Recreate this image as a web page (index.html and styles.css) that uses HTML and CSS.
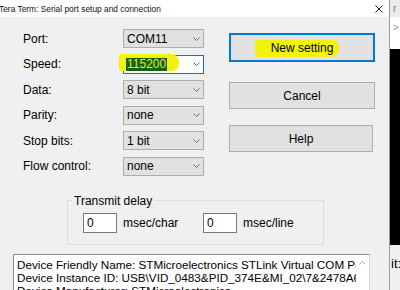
FILE: index.html
```html
<!DOCTYPE html>
<html lang="en">
<head>
  <meta charset="UTF-8" />
  <title>Tera Term: Serial port setup and connection</title>
  <link rel="stylesheet" href="styles.css">
</head>
<body>
  <div class="screen">
    <div class="dialog">
      <div class="titlebar">
        <span class="title">Tera Term: Serial port setup and connection</span>
        <svg class="close" width="8" height="8" viewBox="0 0 8 8">
          <path d="M0.5 0.5 L7.5 7.5 M7.5 0.5 L0.5 7.5" stroke="#222" stroke-width="1" fill="none"/>
        </svg>
      </div>

      <div class="top">
        <div class="fields">
          <div class="row">
            <label>Port:</label>
            <div class="combo"><span>COM11</span><svg class="chev" width="7" height="4" viewBox="0 0 7 4"><path d="M0.5 0.5 L3.5 3.5 L6.5 0.5" stroke="#6a6a6a" fill="none"/></svg></div>
          </div>
          <div class="row">
            <label>Speed:</label>
            <div class="combo focus">
              <span class="hl"></span>
              <span class="sel">115200</span>
              <svg class="chev" width="7" height="4" viewBox="0 0 7 4"><path d="M0.5 0.5 L3.5 3.5 L6.5 0.5" stroke="#6a6a6a" fill="none"/></svg>
            </div>
          </div>
          <div class="row">
            <label>Data:</label>
            <div class="combo"><span>8 bit</span><svg class="chev" width="7" height="4" viewBox="0 0 7 4"><path d="M0.5 0.5 L3.5 3.5 L6.5 0.5" stroke="#6a6a6a" fill="none"/></svg></div>
          </div>
          <div class="row">
            <label>Parity:</label>
            <div class="combo"><span>none</span><svg class="chev" width="7" height="4" viewBox="0 0 7 4"><path d="M0.5 0.5 L3.5 3.5 L6.5 0.5" stroke="#6a6a6a" fill="none"/></svg></div>
          </div>
          <div class="row">
            <label>Stop bits:</label>
            <div class="combo"><span>1 bit</span><svg class="chev" width="7" height="4" viewBox="0 0 7 4"><path d="M0.5 0.5 L3.5 3.5 L6.5 0.5" stroke="#6a6a6a" fill="none"/></svg></div>
          </div>
          <div class="row">
            <label>Flow control:</label>
            <div class="combo"><span>none</span><svg class="chev" width="7" height="4" viewBox="0 0 7 4"><path d="M0.5 0.5 L3.5 3.5 L6.5 0.5" stroke="#6a6a6a" fill="none"/></svg></div>
          </div>
        </div>

        <div class="buttons">
          <div class="btn default"><span class="hl"></span><span class="label">New setting</span></div>
          <div class="btn cancel">Cancel</div>
          <div class="btn help">Help</div>
        </div>
      </div>

      <fieldset class="delay">
        <legend>Transmit delay</legend>
        <div class="delay-row">
          <div class="num">0</div>
          <span class="unit">msec/char</span>
          <div class="num">0</div>
          <span class="unit">msec/line</span>
        </div>
      </fieldset>

      <div class="info">
        <div class="info-text">
          <div class="line">Device Friendly Name: STMicroelectronics STLink Virtual COM Port (COM11)</div>
          <div class="line">Device Instance ID: USB\VID_0483&amp;PID_374E&amp;MI_02\7&amp;2478A674&amp;0&amp;0002</div>
          <div class="line">Device Manufacturer: STMicroelectronics</div>
        </div>
        <div class="scroll">
          <svg width="7" height="4" viewBox="0 0 7 4"><path d="M0.5 3.5 L3.5 0.5 L6.5 3.5" stroke="#b0b0b0" fill="none"/></svg>
        </div>
      </div>
    </div>

    <div class="side">
      <div class="side-top">r</div>
      <div class="side-nav">&gt;</div>
      <div class="side-dark"></div>
      <div class="side-bottom">it:</div>
    </div>
  </div>
</body>
</html>
```

FILE: styles.css
```css
* {
  box-sizing: border-box;
}

body {
  margin: 0;
  font-family: "Liberation Sans", Arial, sans-serif;
  font-size: 12px;
  color: #000;
  background: #000;
}

.screen {
  display: flex;
  width: 400px;
  height: 290px;
  overflow: hidden;
}

.dialog {
  width: 390px;
  height: 290px;
  background: #f0f0f0;
  border-right: 1px solid #9a9a9a;
  display: flex;
  flex-direction: column;
  overflow: hidden;
}

.titlebar {
  height: 17px;
  flex: none;
  background: #fff;
  display: flex;
  align-items: center;
  justify-content: space-between;
}

.title {
  font-size: 8.4px;
  margin-left: -1px;
  color: #111;
}

.close {
  margin-right: 6px;
}

/* combos and buttons */
.top {
  display: flex;
  gap: 25px;
  margin: 12px 0 0 23px;
}

.fields {
  display: flex;
  flex-direction: column;
  gap: 6.5px;
}

.row {
  display: flex;
  align-items: center;
  height: 19px;
}

.row label {
  width: 100px;
}

.combo {
  position: relative;
  width: 81px;
  height: 19px;
  border: 1px solid #adadad;
  background: #e1e1e1;
  display: flex;
  align-items: center;
  justify-content: space-between;
  padding: 0 3px 0 3px;
}

.combo.focus {
  background: #fff;
  border-color: #0078d7;
}

.combo .hl {
  position: absolute;
  left: -5px;
  top: -2px;
  width: 60px;
  height: 17px;
  background: #f2f20c;
  border-radius: 3px 8px 7px 3px;
}

.combo .sel {
  position: relative;
  background: #11650f;
  color: #e4e44c;
  line-height: 13px;
  padding: 0 1px;
  margin-left: -1px;
}

.buttons {
  display: flex;
  flex-direction: column;
  width: 146px;
  margin-top: 4px;
}

.btn {
  position: relative;
  height: 27px;
  border: 1px solid #adadad;
  background: #e1e1e1;
  display: flex;
  align-items: center;
  justify-content: center;
}

.btn.default {
  height: 29px;
  border: 2px solid #0078d7;
}

.btn .hl {
  position: absolute;
  left: 24px;
  top: 5px;
  width: 84px;
  height: 17px;
  background: #f2f20c;
  border-radius: 2px 6px 8px 3px;
}

.btn .label {
  position: relative;
}

.btn.cancel {
  margin-top: 20px;
}

.btn.help {
  margin-top: 16px;
  width: 144px;
}

/* transmit delay group */
.delay {
  margin: 18px 0 0 67px;
  width: 255px;
  padding: 0;
  border: 1px solid #dcdcdc;
}

.delay legend {
  margin-left: 4px;
  padding: 0 2px;
  line-height: 14px;
}

.delay-row {
  display: flex;
  align-items: center;
  padding: 5px 0 11px 15px;
}

.num {
  width: 34px;
  height: 20px;
  background: #fff;
  border: 1px solid #7a7a7a;
  padding-left: 3px;
  line-height: 18px;
}

.unit {
  width: 80px;
  margin-left: 6px;
}

/* device info */
.info {
  margin: 9px 0 0 13px;
  width: 357px;
  flex: 1;
  display: flex;
  background: #fff;
  border: 1px solid #8a8a8a;
  border-right-color: #d8d8d8;
  border-bottom: none;
}

.info-text {
  flex: 1;
  min-width: 0;
  overflow: hidden;
  padding: 3px 0 0 3px;
  font-size: 11.7px;
  line-height: 13px;
}

.info-text .line {
  white-space: nowrap;
  overflow: hidden;
}

.scroll {
  width: 13px;
  display: flex;
  justify-content: center;
  padding-top: 6px;
}

/* neighbouring window */
.side {
  width: 10px;
  display: flex;
  flex-direction: column;
  overflow: hidden;
}

.side-top {
  height: 17px;
  background: #ececec;
  color: #777;
  font-size: 10px;
  padding: 3px 0 0 3px;
}

.side-nav {
  height: 32px;
  background: #fff;
  color: #999;
  font-size: 10px;
  padding: 5px 0 0 3px;
}

.side-dark {
  height: 196px;
  background: #000;
}

.side-bottom {
  flex: 1;
  background: #f0f0f0;
  font-size: 13px;
  padding: 11px 0 0 1px;
  white-space: nowrap;
  overflow: hidden;
}
```
